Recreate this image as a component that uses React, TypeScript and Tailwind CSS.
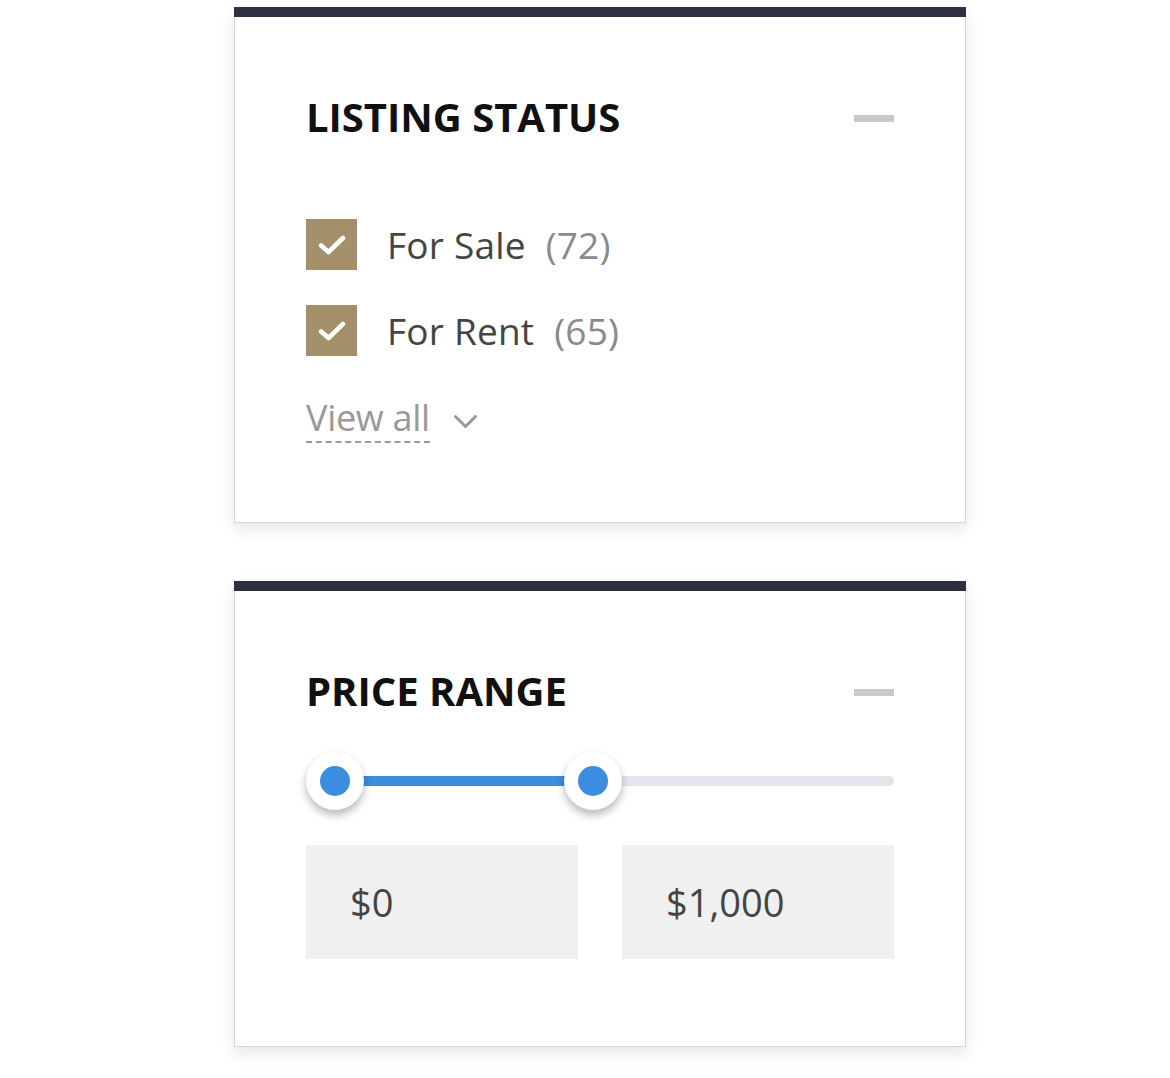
import React from "react";

const font = { fontFamily: '"Open Sans", "Noto Sans", sans-serif' };

function Minus() {
  return <div className="h-[7px] w-[40px] bg-[#c9c9c9] mt-[3px]" />;
}

function Check() {
  return (
    <div className="flex h-[51px] w-[51px] shrink-0 items-center justify-center bg-[#a38f6a]">
      <svg width="30" height="24" viewBox="0 0 30 24" fill="none">
        <path d="M4 12.5 L11.5 19 L26 5" stroke="white" strokeWidth="4.6" strokeLinecap="round" strokeLinejoin="round" />
      </svg>
    </div>
  );
}

function Row({ label, count }: { label: string; count: string }) {
  return (
    <div className="flex items-center">
      <Check />
      <div className="ml-[30px] flex items-baseline text-[37px] leading-[44px] mt-[1px] tracking-[0.2px]">
        <span className="text-[#444]">{label}</span>
        <span className="ml-[20px] text-[#8a8a8a]">{count}</span>
      </div>
    </div>
  );
}

function Card({ children }: { children: React.ReactNode }) {
  return (
    <div className="w-[732px] bg-white border-x border-b border-[#d6d6d6] shadow-[0_6px_14px_rgba(0,0,0,0.10)]">
      <div className="h-[10px] bg-[#2d303e] -mx-px" />
      {children}
    </div>
  );
}

export default function App() {
  return (
    <div className="min-h-[1078px] bg-white pt-[7px] pl-[234px]" style={font}>
      <div className="flex flex-col gap-[58px]">
        <Card>
          <div className="pl-[71px] pr-[71px] pt-[76px] pb-[79px]">
            <div className="flex items-center justify-between">
              <h2 className="text-[40px] leading-[48px] font-bold text-[#111]">LISTING STATUS</h2>
              <Minus />
            </div>
            <div className="mt-[78px] flex flex-col gap-[35px]">
              <Row label="For Sale" count="(72)" />
              <Row label="For Rent" count="(65)" />
            </div>
            <div className="mt-[40px] flex items-center">
              <span className="text-[36px] leading-[44px] text-[#999] tracking-[-0.3px] border-b-2 border-dashed border-[#9a9a9a] pb-[1px]">View all</span>
              <svg className="ml-[23px] mt-[4px]" width="25" height="16" viewBox="0 0 25 16" fill="none">
                <path d="M2.5 2.5 L12.5 12.5 L22.5 2.5" stroke="#999" strokeWidth="3" strokeLinecap="round" strokeLinejoin="round" />
              </svg>
            </div>
          </div>
        </Card>
        <Card>
          <div className="pl-[71px] pr-[71px] pt-[76px] pb-[87px]">
            <div className="flex items-center justify-between">
              <h2 className="text-[40px] leading-[48px] font-bold text-[#111]">PRICE RANGE</h2>
              <Minus />
            </div>
            <div className="relative mt-[37px] h-[58px]">
              <div className="absolute left-[28px] right-0 top-[24px] h-[10px] rounded-full bg-[#e4e4ea]" />
              <div className="absolute left-[28px] w-[259px] top-[24px] h-[10px] bg-[#3a8ddf]" />
              <div className="absolute left-0 top-0 flex h-[58px] w-[58px] items-center justify-center rounded-full bg-white shadow-[0_5px_8px_rgba(0,0,0,0.28)]">
                <div className="h-[30px] w-[30px] rounded-full bg-[#3a8ddf]" />
              </div>
              <div className="absolute left-[258px] top-0 flex h-[58px] w-[58px] items-center justify-center rounded-full bg-white shadow-[0_5px_8px_rgba(0,0,0,0.28)]">
                <div className="h-[30px] w-[30px] rounded-full bg-[#3a8ddf]" />
              </div>
            </div>
            <div className="mt-[35px] grid grid-cols-2 gap-[44px]">
              <div className="flex h-[114px] items-center bg-[#f0f0f0] pl-[44px] text-[38px] text-[#444]">$0</div>
              <div className="flex h-[114px] items-center bg-[#f0f0f0] pl-[44px] text-[38px] text-[#444]">$1,000</div>
            </div>
          </div>
        </Card>
      </div>
    </div>
  );
}
